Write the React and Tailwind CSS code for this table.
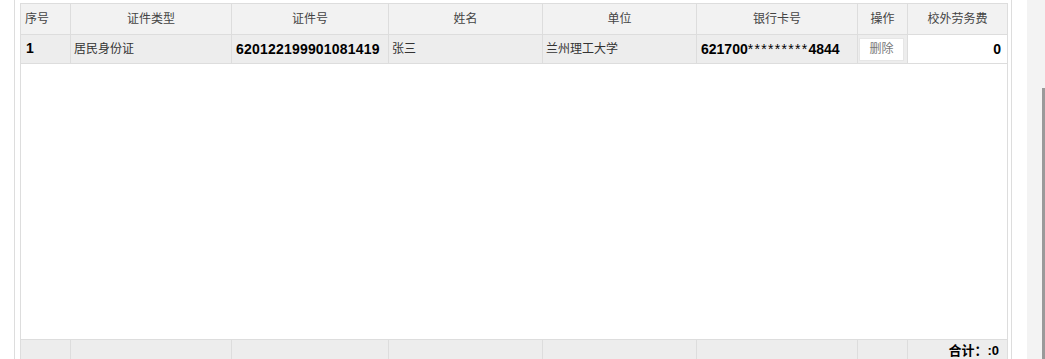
const COLS = "grid grid-cols-[50px_161px_157px_154px_154px_161px_50px_100px]";
const HEADS = ["证件类型", "证件号", "姓名", "单位", "银行卡号", "操作", "校外劳务费"];

const rows = [
  { no: 1, type: "居民身份证", id: "620122199901081419", name: "张三", org: "兰州理工大学", card: ["621700", "*********", "4844"], fee: 0 },
];

export default function App() {
  const total = rows.reduce((s, r) => s + r.fee, 0);
  return (
    <div className="w-[1045px] h-[359px] flex bg-white overflow-hidden text-[12px] text-[#333] font-['Liberation_Sans','Noto_Sans_CJK_SC',sans-serif]">
      <div className="w-[14px] shrink-0" />

      {/* panel */}
      <div className="w-[998px] shrink-0 border-x border-[#dddddd] pl-[5px] pr-[3px] pt-[3px]">
        <div className="border-t border-l border-[#dddddd] flex flex-col">
          {/* header */}
          <div className={`${COLS} bg-[#f2f2f2] h-[31px]`}>
            <div className="border-r border-b border-[#dddddd] flex items-center pl-[4px] text-[#444]">序号</div>
            {HEADS.map(h => (
              <div key={h} className="border-r border-b border-[#dddddd] flex items-center justify-center text-[#444]">{h}</div>
            ))}
          </div>

          {/* rows */}
          {rows.map(r => (
            <div key={r.no} className={`${COLS} bg-[#ededed] h-[29px]`}>
              <div className="border-r border-b border-[#dddddd] pl-[5px] pt-[3px] font-bold text-black text-[14px]">{r.no}</div>
              <div className="border-r border-b border-[#dddddd] flex items-center pl-[3px]">{r.type}</div>
              <div className="border-r border-b border-[#dddddd] flex items-center pl-[4px] font-bold text-black text-[14px] tracking-[0.2px]">{r.id}</div>
              <div className="border-r border-b border-[#dddddd] flex items-center pl-[3px]">{r.name}</div>
              <div className="border-r border-b border-[#dddddd] flex items-center pl-[3px]">{r.org}</div>
              <div className="border-r border-b border-[#dddddd] flex items-center pl-[4px] font-bold text-black text-[14px]">
                {r.card[0]}<span className="font-normal tracking-[1.3px]">{r.card[1]}</span>{r.card[2]}
              </div>
              <div className="border-r border-b border-[#dddddd] flex items-center pl-[1px]">
                <button className="w-[45px] h-[23px] bg-white border border-[#e6e6e6] text-[#777]">删除</button>
              </div>
              <div className="border-r border-b border-[#dddddd] bg-white flex items-center justify-end pr-[6px] font-bold text-black text-[14px]">{r.fee}</div>
            </div>
          ))}

          {/* empty body */}
          <div className="h-[275px] bg-white border-r border-[#dddddd]" />

          {/* footer */}
          <div className={`${COLS} bg-[#ededed] h-[26px] border-t border-[#dddddd]`}>
            {Array(7).fill(0).map((_, i) => (
              <div key={i} className="border-r border-[#dddddd]" />
            ))}
            <div className="border-r border-[#dddddd] flex items-start justify-end pr-[8px] pt-[1px] font-bold text-black text-[13px]">合计：:{total}</div>
          </div>
        </div>
      </div>

      <div className="w-[15px] shrink-0" />

      {/* page scrollbar */}
      <div className="w-[18px] shrink-0 bg-[#f3f3f3] flex justify-end">
        <div className="w-[3px] h-[271px] mt-[88px] bg-[#9a9a9a]" />
      </div>
    </div>
  );
}
